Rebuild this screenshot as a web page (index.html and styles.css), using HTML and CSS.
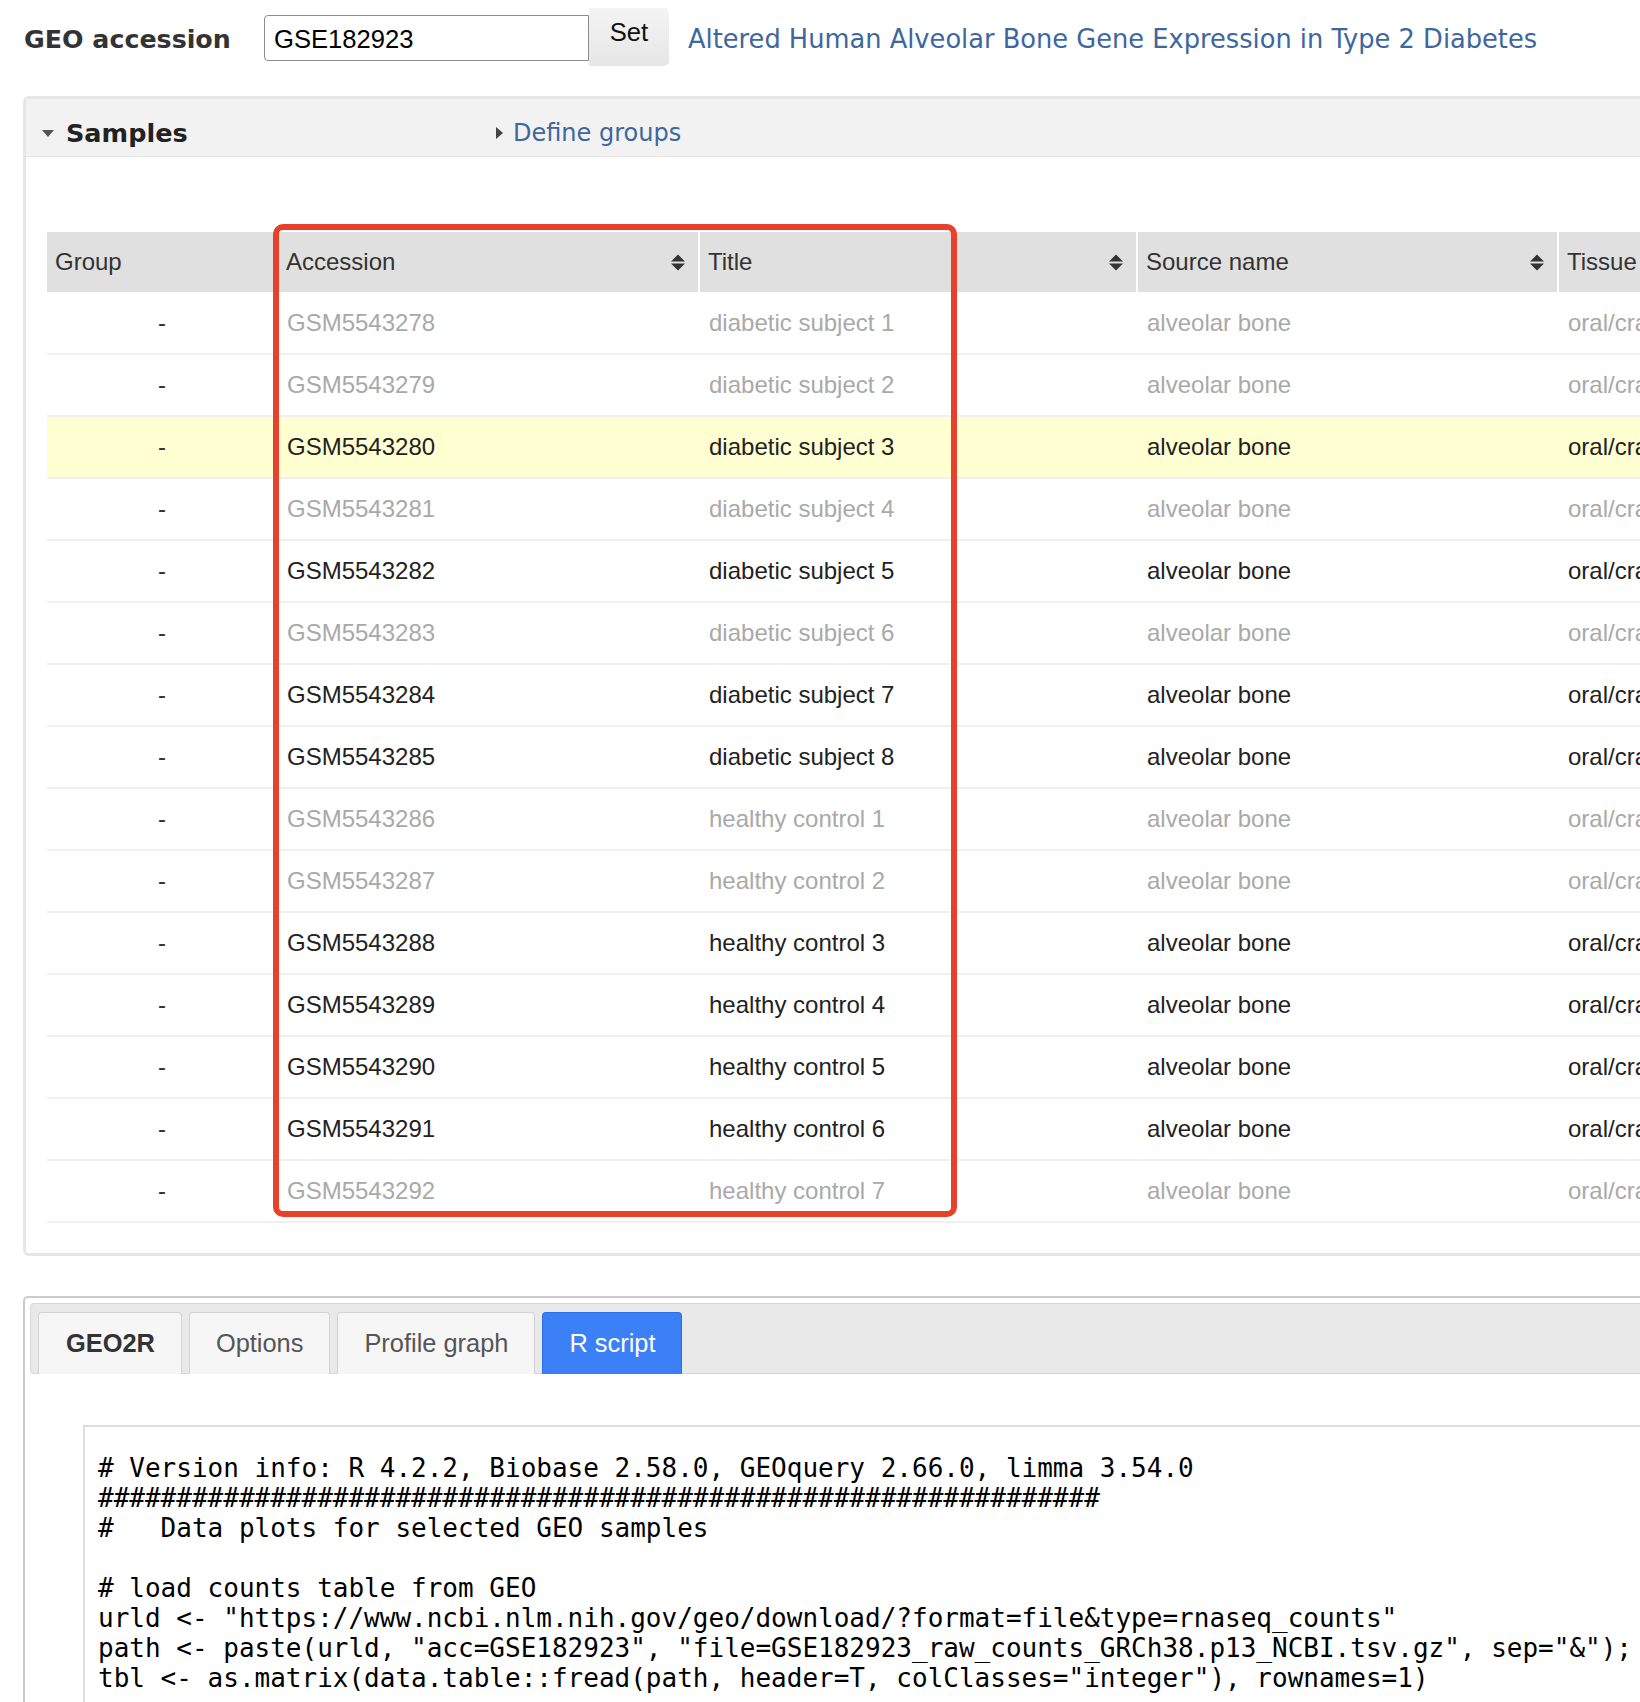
FILE: index.html
```html
<!DOCTYPE html>
<html>
<head>
<meta charset="utf-8">
<title>GEO2R</title>
<link rel="stylesheet" href="styles.css">
</head>
<body>
<div class="page">
  <div class="topbar">
    <span class="acc-label">GEO accession</span>
    <div class="acc-form">
      <input class="acc-input" type="text" value="GSE182923">
      <button class="acc-set" type="button">Set</button>
    </div>
    <a class="series-title" href="#">Altered Human Alveolar Bone Gene Expression in Type 2 Diabetes</a>
  </div>

  <section class="panel samples">
    <div class="panel-head">
      <div class="toggle toggle-open"><span class="tri-down"></span><span class="toggle-label">Samples</span></div>
      <div class="toggle toggle-link"><span class="tri-right"></span><span class="link-label">Define groups</span></div>
    </div>
    <div class="panel-body">
      <div class="table-wrap">
        <table class="samples-table">
          <colgroup>
            <col class="c-group"><col class="c-acc"><col class="c-title"><col class="c-source"><col class="c-tissue">
          </colgroup>
          <thead>
            <tr>
              <th><div class="th-inner">Group</div></th>
              <th><div class="th-inner">Accession<svg class="sort" viewBox="0 0 16 17"><path d="M1 7.5 L8 0.5 L15 7.5 Z M1 9.5 L8 16.5 L15 9.5 Z"/></svg></div></th>
              <th><div class="th-inner">Title<svg class="sort" viewBox="0 0 16 17"><path d="M1 7.5 L8 0.5 L15 7.5 Z M1 9.5 L8 16.5 L15 9.5 Z"/></svg></div></th>
              <th><div class="th-inner">Source name<svg class="sort" viewBox="0 0 16 17"><path d="M1 7.5 L8 0.5 L15 7.5 Z M1 9.5 L8 16.5 L15 9.5 Z"/></svg></div></th>
              <th><div class="th-inner">Tissue<svg class="sort" viewBox="0 0 16 17"><path d="M1 7.5 L8 0.5 L15 7.5 Z M1 9.5 L8 16.5 L15 9.5 Z"/></svg></div></th>
            </tr>
          </thead>
          <tbody>
            <tr class="dim"><td class="grp">-</td><td>GSM5543278</td><td>diabetic subject 1</td><td>alveolar bone</td><td>oral/craniofacial</td></tr>
            <tr class="dim"><td class="grp">-</td><td>GSM5543279</td><td>diabetic subject 2</td><td>alveolar bone</td><td>oral/craniofacial</td></tr>
            <tr class="hl"><td class="grp">-</td><td>GSM5543280</td><td>diabetic subject 3</td><td>alveolar bone</td><td>oral/craniofacial</td></tr>
            <tr class="dim"><td class="grp">-</td><td>GSM5543281</td><td>diabetic subject 4</td><td>alveolar bone</td><td>oral/craniofacial</td></tr>
            <tr><td class="grp">-</td><td>GSM5543282</td><td>diabetic subject 5</td><td>alveolar bone</td><td>oral/craniofacial</td></tr>
            <tr class="dim"><td class="grp">-</td><td>GSM5543283</td><td>diabetic subject 6</td><td>alveolar bone</td><td>oral/craniofacial</td></tr>
            <tr><td class="grp">-</td><td>GSM5543284</td><td>diabetic subject 7</td><td>alveolar bone</td><td>oral/craniofacial</td></tr>
            <tr><td class="grp">-</td><td>GSM5543285</td><td>diabetic subject 8</td><td>alveolar bone</td><td>oral/craniofacial</td></tr>
            <tr class="dim"><td class="grp">-</td><td>GSM5543286</td><td>healthy control 1</td><td>alveolar bone</td><td>oral/craniofacial</td></tr>
            <tr class="dim"><td class="grp">-</td><td>GSM5543287</td><td>healthy control 2</td><td>alveolar bone</td><td>oral/craniofacial</td></tr>
            <tr><td class="grp">-</td><td>GSM5543288</td><td>healthy control 3</td><td>alveolar bone</td><td>oral/craniofacial</td></tr>
            <tr><td class="grp">-</td><td>GSM5543289</td><td>healthy control 4</td><td>alveolar bone</td><td>oral/craniofacial</td></tr>
            <tr><td class="grp">-</td><td>GSM5543290</td><td>healthy control 5</td><td>alveolar bone</td><td>oral/craniofacial</td></tr>
            <tr><td class="grp">-</td><td>GSM5543291</td><td>healthy control 6</td><td>alveolar bone</td><td>oral/craniofacial</td></tr>
            <tr class="dim"><td class="grp">-</td><td>GSM5543292</td><td>healthy control 7</td><td>alveolar bone</td><td>oral/craniofacial</td></tr>
          </tbody>
        </table>
        <div class="highlight-box"></div>
      </div>
    </div>
  </section>

  <section class="panel tabs-panel">
    <div class="tabbar">
      <div class="tab tab-strong">GEO2R</div>
      <div class="tab">Options</div>
      <div class="tab">Profile graph</div>
      <div class="tab tab-active">R script</div>
    </div>
    <div class="tab-body">
<pre class="code"># Version info: R 4.2.2, Biobase 2.58.0, GEOquery 2.66.0, limma 3.54.0
################################################################
#   Data plots for selected GEO samples

# load counts table from GEO
urld &lt;- "https://www.ncbi.nlm.nih.gov/geo/download/?format=file&amp;type=rnaseq_counts"
path &lt;- paste(urld, "acc=GSE182923", "file=GSE182923_raw_counts_GRCh38.p13_NCBI.tsv.gz", sep="&amp;");
tbl &lt;- as.matrix(data.table::fread(path, header=T, colClasses="integer"), rownames=1)

# pre-filter low count genes
</pre>
    </div>
  </section>
</div>
</body>
</html>
```

FILE: styles.css
```css
html, body {
  margin: 0;
  padding: 0;
  overflow: hidden;
  background: #ffffff;
}

.page {
  width: 1900px;
  padding-left: 23px;
  font-family: "Liberation Sans", Arial, sans-serif;
  color: #222;
}

/* ---------- top bar ---------- */
.topbar {
  display: flex;
  align-items: center;
  height: 58px;
  padding-top: 8px;
}

.acc-label {
  font-family: "DejaVu Sans", Verdana, sans-serif;
  font-weight: bold;
  font-size: 25.3px;
  color: #333;
  width: 240px;
  padding: 4px 0 0 1px;
}

.acc-form {
  display: flex;
  align-items: center;
}

.acc-input {
  box-sizing: border-box;
  width: 325px;
  height: 46px;
  margin: 2px 0 0 0;
  padding: 2px 0 0 9px;
  border: 1.5px solid #8c8c8c;
  border-radius: 4px 0 0 4px;
  font-family: "Liberation Sans", Arial, sans-serif;
  font-size: 25.6px;
  color: #000;
  background: #fff;
}

.acc-set {
  box-sizing: border-box;
  width: 80px;
  height: 58px;
  border: none;
  border-radius: 0 5px 5px 0;
  background: linear-gradient(#f4f4f4, #e6e6e6);
  font-family: "Liberation Sans", Arial, sans-serif;
  font-size: 25.6px;
  color: #111;
  padding: 0 0 10px 0;
}

.series-title {
  margin-left: 19px;
  padding-top: 4px;
  font-family: "DejaVu Sans", Verdana, sans-serif;
  font-size: 25.7px;
  color: #3d679e;
  text-decoration: none;
  white-space: nowrap;
}

/* ---------- panels ---------- */
.panel {
  box-sizing: border-box;
  width: 1860px;
  border: 3px solid #e6e6e6;
  border-radius: 6px;
}

.samples {
  margin-top: 30px;
}

.panel-head {
  box-sizing: border-box;
  display: flex;
  align-items: center;
  height: 58px;
  padding: 10px 0 0 16px;
  background: #f2f2f2;
  border-bottom: 1px solid #e4e4e4;
}

.toggle {
  display: flex;
  align-items: center;
}

.toggle-open {
  width: 454px;
}

.tri-down {
  width: 0;
  height: 0;
  border-left: 6px solid transparent;
  border-right: 6px solid transparent;
  border-top: 7px solid #555;
  margin-right: 12px;
  margin-top: 1px;
}

.toggle-label {
  font-family: "DejaVu Sans", Verdana, sans-serif;
  font-weight: bold;
  font-size: 25.5px;
  color: #222;
}

.tri-right {
  width: 0;
  height: 0;
  border-top: 6px solid transparent;
  border-bottom: 6px solid transparent;
  border-left: 7px solid #444;
  margin-right: 10px;
}

.link-label {
  font-family: "DejaVu Sans", Verdana, sans-serif;
  font-size: 24px;
  color: #3d679e;
}

.panel-body {
  padding: 75px 0 30px 21px;
}

.table-wrap {
  position: relative;
}

/* ---------- table ---------- */
.samples-table {
  table-layout: fixed;
  border-collapse: collapse;
  width: 1811px;
  font-size: 24px;
}

.c-group { width: 230px; }
.c-acc { width: 422px; }
.c-title { width: 438px; }
.c-source { width: 421px; }
.c-tissue { width: 300px; }

.samples-table th {
  box-sizing: border-box;
  height: 60px;
  padding: 0;
  background: #e0e0e0;
  border-left: 2px solid #ffffff;
  font-weight: normal;
  text-align: left;
  color: #333;
}

.samples-table th:first-child {
  border-left: none;
}

.th-inner {
  display: flex;
  align-items: center;
  justify-content: space-between;
  padding: 0 12px 0 8px;
}

.sort {
  width: 16px;
  height: 17px;
  fill: #333;
  flex: none;
}

.samples-table td {
  box-sizing: border-box;
  height: 62px;
  padding: 0 0 0 10px;
  border-bottom: 2px solid #f0f0f0;
  color: #222;
  white-space: nowrap;
  overflow: hidden;
}

.samples-table td.grp {
  padding: 0;
  text-align: center;
  color: #333;
}

.samples-table tr.dim td {
  color: #a9a9a9;
}

.samples-table tr.dim td.grp {
  color: #333;
}

.samples-table tr.hl td {
  background: #ffffd1;
}

.highlight-box {
  position: absolute;
  box-sizing: border-box;
  left: 226px;
  top: -8px;
  width: 684px;
  height: 993px;
  border: 6px solid #e8412b;
  border-radius: 10px;
  pointer-events: none;
}

/* ---------- tabs panel ---------- */
.tabs-panel {
  margin-top: 40px;
  border: 2px solid #cccccc;
  border-radius: 5px;
  padding: 5px;
  height: 500px;
}

.tabbar {
  display: flex;
  align-items: flex-end;
  gap: 7px;
  height: 71px;
  box-sizing: border-box;
  padding: 0 0 0 7px;
  background: #e9e9e9;
  border: 1px solid #d6d6d6;
  border-radius: 4px;
}

.tab {
  box-sizing: border-box;
  height: 62px;
  margin-bottom: -1px;
  padding: 0 26px;
  display: flex;
  align-items: center;
  background: #f6f6f6;
  border: 1px solid #d3d3d3;
  border-bottom: none;
  border-radius: 4px 4px 0 0;
  font-size: 25.4px;
  color: #555;
}

.tab-strong {
  font-weight: bold;
  color: #333;
  padding: 0 26px 0 27px;
}

.tab-active {
  background: #3b80f6;
  border-color: #2b6fe6;
  color: #ffffff;
}

.tab-body {
  padding: 51px 0 0 53px;
}

.code {
  margin: 0;
  box-sizing: border-box;
  width: 1700px;
  border: 2px solid #dddddd;
  padding: 26px 0 20px 13px;
  font-family: "DejaVu Sans Mono", "Liberation Mono", monospace;
  font-size: 26px;
  line-height: 30px;
  color: #000;
}
```
